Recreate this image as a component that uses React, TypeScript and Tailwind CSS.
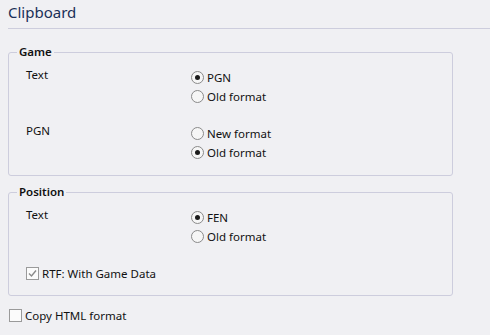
import React from "react";

function Radio({ checked, label }: { checked?: boolean; label: string }) {
  return (
    <div className="flex h-[19px] items-center">
      <span className="flex h-[13px] w-[13px] items-center justify-center rounded-full border border-[#8a8a8a] bg-[#f6f6f6]">
        {checked && <span className="h-[5px] w-[5px] rounded-full bg-[#1a1a1a]" />}
      </span>
      <span className="ml-[3px] leading-[19px]">{label}</span>
    </div>
  );
}

function Check({ checked, label, muted }: { checked?: boolean; label: string; muted?: boolean }) {
  return (
    <div className="flex h-[19px] items-center">
      <span className="flex h-[13px] w-[13px] items-center justify-center border border-[#9a9a9a] bg-[#fbfbfb]">
        {checked && (
          <svg width="9" height="9" viewBox="0 0 9 9">
            <path d="M1 4.5 L3.5 7 L8 1.5" fill="none" stroke={muted ? "#8a8a8a" : "#333"} strokeWidth="1.4" />
          </svg>
        )}
      </span>
      <span className="ml-[3px] leading-[19px]">{label}</span>
    </div>
  );
}

function Group({ title, children, className }: { title: string; children: React.ReactNode; className?: string }) {
  return (
    <div className={"relative mr-[37px] rounded-[3px] border border-[#cdcddd] pl-[17px] " + (className ?? "")}>
      <span className="absolute -top-[9px] left-[8px] bg-[#f0f0f3] px-[2px] font-semibold leading-[16px]">{title}</span>
      {children}
    </div>
  );
}

export default function App() {
  return (
    <div
      className="h-[335px] w-[490px] overflow-hidden bg-[#f0f0f3] text-[11.5px] text-[#111]"
      style={{ fontFamily: '"Noto Sans", "Open Sans", sans-serif' }}
    >
      <div className="h-[28px] pl-[8px] pt-[1px] text-[15px] leading-[22px] text-[#1a2f58]">Clipboard</div>
      <div className="ml-[8px] h-px bg-[#cdcddd]" />
      <div className="pl-[8px]">
        <Group title="Game" className="mt-[23px] pb-[13px] pt-[15px]">
          <div className="flex">
            <div className="w-[165px] leading-[13px]">Text</div>
            <div>
              <Radio checked label="PGN" />
              <Radio label="Old format" />
            </div>
          </div>
          <div className="mt-[18px] flex">
            <div className="w-[165px] leading-[13px]">PGN</div>
            <div>
              <Radio label="New format" />
              <Radio checked label="Old format" />
            </div>
          </div>
        </Group>
        <Group title="Position" className="mt-[16px] pb-[12px] pt-[15px]">
          <div className="flex">
            <div className="w-[165px] leading-[13px]">Text</div>
            <div>
              <Radio checked label="FEN" />
              <Radio label="Old format" />
            </div>
          </div>
          <div className="mt-[18px]">
            <Check checked muted label="RTF: With Game Data" />
          </div>
        </Group>
        <div className="mt-[10px] pl-[1px]">
          <Check label="Copy HTML format" />
        </div>
      </div>
    </div>
  );
}
